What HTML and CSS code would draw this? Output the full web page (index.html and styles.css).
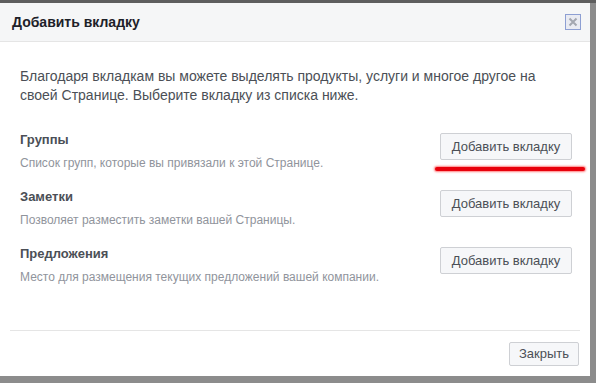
FILE: index.html
```html
<!DOCTYPE html>
<html lang="ru">
<head>
    <meta charset="UTF-8">
    <title>Добавить вкладку</title>
    <link rel="stylesheet" href="styles.css">
</head>
<body>
<div class="dialog">
    <div class="dialog-head">
        <span class="dialog-title">Добавить вкладку</span>
        <span class="close">
            <svg width="10" height="10" viewBox="0 0 10 10">
                <path d="M1.5 1.5 L8.5 8.5 M8.5 1.5 L1.5 8.5" stroke="#a3a7b0" stroke-width="2"/>
            </svg>
        </span>
    </div>
    <div class="dialog-body">
        <p class="intro">Благодаря вкладкам вы можете выделять продукты, услуги и многое другое на своей Странице. Выберите вкладку из списка ниже.</p>
        <div class="tab-row">
            <div class="tab-info">
                <div class="tab-name">Группы</div>
                <div class="tab-desc">Список групп, которые вы привязали к этой Странице.</div>
            </div>
            <button type="button" class="btn">Добавить вкладку</button>
            <span class="marker"></span>
        </div>
        <div class="tab-row">
            <div class="tab-info">
                <div class="tab-name">Заметки</div>
                <div class="tab-desc">Позволяет разместить заметки вашей Страницы.</div>
            </div>
            <button type="button" class="btn">Добавить вкладку</button>
        </div>
        <div class="tab-row">
            <div class="tab-info">
                <div class="tab-name">Предложения</div>
                <div class="tab-desc">Место для размещения текущих предложений вашей компании.</div>
            </div>
            <button type="button" class="btn">Добавить вкладку</button>
        </div>
    </div>
    <div class="dialog-foot">
        <button type="button" class="btn">Закрыть</button>
    </div>
</div>
</body>
</html>
```

FILE: styles.css
```css
html, body {
    margin: 0;
    height: 100%;
}
body {
    background: #8c8c8c;
    border-top: 3px solid #5e5e5e;
    box-sizing: border-box;
    font-family: "Liberation Sans", Arial, sans-serif;
    overflow: hidden;
}
.dialog {
    width: 590px;
    height: 373px;
    background: #fff;
    display: flex;
    flex-direction: column;
}
.dialog-head {
    height: 38px;
    background: #f5f6f7;
    border-bottom: 1px solid #e5e5e5;
    display: flex;
    align-items: center;
    justify-content: space-between;
    padding: 0 9px 0 12px;
}
.dialog-title {
    font-size: 14px;
    font-weight: bold;
    color: #1d2129;
}
.close {
    width: 14px;
    height: 14px;
    border: 1px solid #8d9fd3;
    background: #e9ebf2;
    display: flex;
    align-items: center;
    justify-content: center;
}
.dialog-body {
    padding: 25px 18px 0 20px;
    flex: 1;
}
.intro {
    margin: 0 0 27px;
    font-size: 14px;
    line-height: 19px;
    color: #4b4f56;
}
.tab-row {
    position: relative;
    display: flex;
    align-items: flex-start;
    justify-content: space-between;
    height: 57px;
}
.tab-name {
    font-size: 13px;
    font-weight: bold;
    color: #4b4f56;
    line-height: 16px;
}
.tab-desc {
    margin-top: 7px;
    font-size: 12px;
    color: #90949c;
    line-height: 16px;
}
.btn {
    font-family: "Liberation Sans", Arial, sans-serif;
    font-size: 13px;
    color: #4b4f56;
    background: #f6f7f9;
    border: 1px solid #ced0d4;
    border-radius: 2px;
    height: 27px;
    padding: 0 10px;
    margin-top: 1px;
}
.tab-row .btn {
    width: 132px;
}
.marker {
    position: absolute;
    left: 415px;
    top: 35px;
    width: 150px;
    height: 4px;
    border-radius: 2px;
    background: #e8000b;
    box-shadow: 0 0 2px 1px rgba(255, 40, 40, 0.6);
}
.dialog-foot {
    margin: 0 10px;
    border-top: 1px solid #e5e5e5;
    height: 45px;
    display: flex;
    align-items: center;
    justify-content: flex-end;
}
.dialog-foot .btn {
    height: 24px;
    padding: 0 9px;
    margin: 0 1px 0 0;
}
```
